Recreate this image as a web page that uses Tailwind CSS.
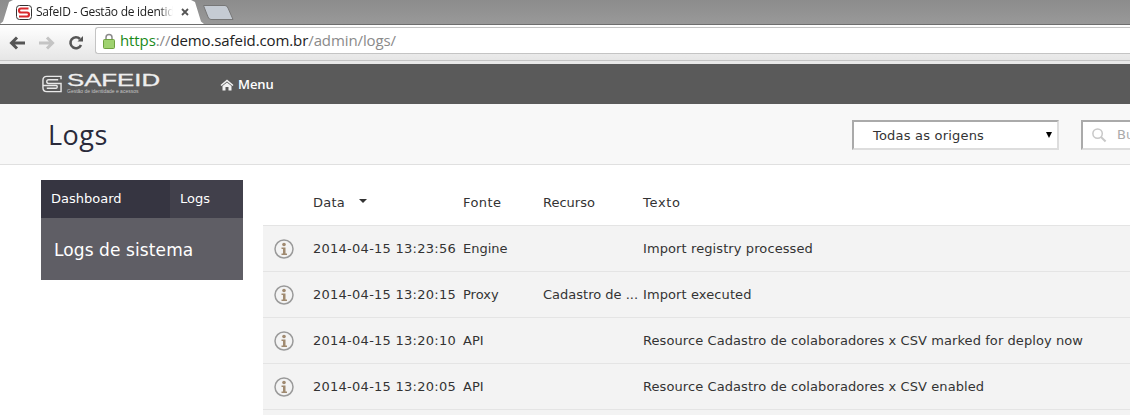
<!DOCTYPE html>
<html lang="pt-BR">
<head>
  <meta charset="UTF-8" />
  <meta name="viewport" content="width=device-width, initial-scale=1.0" />
  <title>SafeID - Logs</title>
  <script src="https://cdn.jsdelivr.net/npm/@tailwindcss/browser@4"></script>
</head>
<body class="w-[1130px] h-[415px] overflow-hidden bg-white font-['DejaVu_Sans',sans-serif] text-[13px] text-[#333]">

  <!-- browser tab strip -->
  <div class="h-[25px] bg-gradient-to-b from-[#8c8c8c] to-[#999] border-b border-[#6e6e6e] flex items-end">
    <div class="w-[204px] h-[24px] bg-white flex items-center pl-[16px] shrink-0 [clip-path:polygon(0_100%,3px_90%,9px_8%,13px_0,191px_0,195px_8%,201px_90%,204px_100%)]">
      <svg class="w-[16px] h-[15px] shrink-0" viewBox="0 0 16 15">
        <rect x="0.5" y="0.5" width="15" height="14" rx="3" fill="#fff" stroke="#333"/>
        <path d="M12.5 3.5 H5 Q3 3.5 3 5.5 Q3 7.5 5 7.5 H11 Q13 7.5 13 9.5 Q13 11.5 11 11.5 H3" fill="none" stroke="#d8282c" stroke-width="2.2"/>
      </svg>
      <span class="ml-[4px] w-[137px] overflow-hidden whitespace-nowrap font-['Open_Sans',sans-serif] text-[12px] tracking-[-0.25px] text-[#222] [mask-image:linear-gradient(to_right,black_90%,transparent)]">SafeID - Gestão de identid</span>
      <svg class="ml-[8px] w-[8px] h-[8px]" viewBox="0 0 8 8"><path d="M1 1 L7 7 M7 1 L1 7" stroke="#555" stroke-width="1.8"/></svg>
    </div>
    <svg class="ml-[-1px] mb-[4px] w-[31px] h-[15px]" viewBox="0 0 31 15"><path d="M0.5 0.5 H22 Q24 0.5 25 3 L30 14.5 H8 Q6 14.5 5 12 Z" fill="#c5cbd3" stroke="#777"/></svg>
  </div>

  <!-- browser toolbar -->
  <div class="h-[36px] bg-gradient-to-b from-white to-[#e6e6e6] flex items-center pl-[9px] border-b border-[#c4c4c4]">
    <svg class="w-[17px] h-[14px]" viewBox="0 0 17 14"><path d="M8 1.5 L2.5 7 L8 12.5 M3 7 H16" fill="none" stroke="#555" stroke-width="3"/></svg>
    <svg class="ml-[12px] w-[17px] h-[14px]" viewBox="0 0 17 14"><path d="M9 1.5 L14.5 7 L9 12.5 M14 7 H1" fill="none" stroke="#c4c4c4" stroke-width="3"/></svg>
    <svg class="ml-[13px] w-[16px] h-[16px]" viewBox="0 0 16 16"><path d="M13 10 A5.5 5.5 0 1 1 12 4" fill="none" stroke="#555" stroke-width="2.6"/><path d="M9.5 6.5 H15 V1 Z" fill="#555"/></svg>
    <div class="ml-[11px] flex-1 h-[27px] mb-[4px] bg-white border-y border-l border-[#c4c4c4] rounded-l-[3px] flex items-center pl-[7px] font-['Open_Sans',sans-serif] text-[15px] tracking-[-0.1px] whitespace-nowrap">
      <svg class="w-[12px] h-[16px] shrink-0" viewBox="0 0 12 16"><path d="M3 7 V4.5 A3 3 0 0 1 9 4.5 V7" fill="none" stroke="#8a8a8a" stroke-width="1.5"/><rect x="0.5" y="6.5" width="11" height="9" rx="1" fill="#9fd26f" stroke="#6fa040"/></svg>
      <span class="ml-[5px] text-[#1a8a1a]">https</span><span class="text-[#8a8a8a]">://</span><span class="text-[#222]">demo.safeid.com.br</span><span class="text-[#8a8a8a]">/admin/logs/</span>
    </div>
  </div>
  <div class="h-[3px] bg-[#e8e8e8]"></div>

  <!-- app navbar -->
  <header class="h-[40px] bg-[#5a5a5a] flex items-center pl-[42px] text-white">
    <div class="w-[118px] flex items-center shrink-0">
      <svg class="w-[20px] h-[18px] shrink-0" viewBox="0 0 21 18">
        <path d="M20 4 V1 H5 Q1 1 1 5 V13 Q1 17 5 17 H20 V8.5 H7 Q5 8.5 5 6.5 Q5 4.5 7 4.5 H17" fill="none" stroke="#e8e8e8" stroke-width="1.5"/>
        <path d="M1 10.5 H15 Q16 10.5 16 12 Q16 13.5 15 13.5 H5" fill="none" stroke="#e8e8e8" stroke-width="1.5"/>
      </svg>
      <div class="ml-[5px] flex flex-col">
        <svg class="w-[93px] h-[12px] overflow-visible" viewBox="0 0 93 12"><text x="0" y="12" textLength="93" lengthAdjust="spacingAndGlyphs" font-family="Liberation Sans" font-size="16.5" stroke="#eee" stroke-width="0.3" fill="#eee">SAFEID</text></svg>
        <span class="h-[6px] mt-[2px] leading-[6px] text-[5px] font-['Liberation_Sans',sans-serif] whitespace-nowrap text-[#c4c4c4]">Gestão de identidade e acessos</span>
      </div>
    </div>
    <div class="ml-[60px] pt-[1px] flex items-center font-['Open_Sans',sans-serif] font-semibold text-[13px] tracking-[-0.1px]">
      <svg class="w-[14px] h-[12px] mr-[4px]" viewBox="0 0 14 12"><path d="M7 0.5 L0.5 6 L1.5 7 L7 2.5 L12.5 7 L13.5 6 Z M2.5 7 L7 3.5 L11.5 7 V11.5 H8.5 V8 H5.5 V11.5 H2.5 Z" fill="#f2f2f2"/></svg>
      Menu
    </div>
  </header>

  <!-- page title bar -->
  <div class="h-[61px] bg-[#f8f8f8] border-b border-[#e0e0e0] flex items-center pl-[48px]">
    <h1 class="w-[804px] shrink-0 font-['Open_Sans',sans-serif] text-[27px] tracking-[0.5px] leading-none text-[#2a2a3a]">Logs</h1>
    <div class="relative mt-[2px] w-[207px] h-[30px] shrink-0 bg-white border-2 border-t-[#aaa] border-l-[#aaa] border-r-[#ddd] border-b-[#ddd] flex items-center pl-[19px] pt-[2px] text-[13px] tracking-[0.2px] text-[#333]">
      Todas as origens
      <span class="absolute right-[5px] top-[10px] w-0 h-0 border-x-[3.5px] border-x-transparent border-t-[6px] border-t-black"></span>
    </div>
    <div class="ml-[22px] mt-[2px] w-[49px] h-[30px] bg-white border-t-2 border-l-2 border-b-2 border-t-[#aaa] border-l-[#aaa] border-b-[#ddd] flex items-center pl-[8px] text-[13px] text-[#aaa] whitespace-nowrap shrink-0">
      <svg class="w-[16px] h-[16px] shrink-0 mr-[10px]" viewBox="0 0 17 17"><circle cx="7" cy="7" r="5" fill="none" stroke="#c8c8c8" stroke-width="1.6"/><path d="M10.5 10.5 L15.5 15.5" stroke="#c8c8c8" stroke-width="2.2"/></svg>
      Bu
    </div>
  </div>

  <!-- content -->
  <main class="flex pt-[15px] pl-[41px]">
    <aside class="w-[202px] shrink-0 self-start">
      <div class="h-[38px] flex text-white text-[13px]">
        <div class="w-[129px] bg-[#363541] flex items-center pl-[10px]">Dashboard</div>
        <div class="flex-1 bg-[#41404b] flex items-center pl-[10px]">Logs</div>
      </div>
      <div class="h-[62px] bg-[#5f5e65] flex items-center pl-[13px] pt-[3px] text-white text-[17px] tracking-[0.1px]">Logs de sistema</div>
    </aside>

    <section class="ml-[20px] flex-1 whitespace-nowrap">
      <div class="h-[46px] flex items-center pl-[50px] border-b border-[#e4e4e4]">
        <div class="w-[150px] flex items-center tracking-[0.2px]">Data<span class="ml-[14px] mb-[3px] w-0 h-0 border-x-[4px] border-x-transparent border-t-[4px] border-t-[#333]"></span></div>
        <div class="w-[80px] tracking-[0.4px]">Fonte</div>
        <div class="w-[100px]">Recurso</div>
        <div class="tracking-[0.7px]">Texto</div>
      </div>
      <div class="h-[46px] flex items-center bg-[#f3f3f3] border-b border-[#e4e4e4]">
        <div class="w-[50px] pl-[11px]"><svg class="w-[20px] h-[20px]" viewBox="0 0 20 20"><circle cx="10" cy="10" r="9" fill="none" stroke="#9a9a9a" stroke-width="1.5"/><circle cx="10" cy="5.5" r="1.8" fill="#a08a70"/><path d="M7.5 8.5 H11.5 V14.5 H13 V16 H7.5 V14.5 H9 V10 H7.5 Z" fill="#a08a70"/></svg></div>
        <div class="w-[150px] tracking-[0.26px]">2014-04-15 13:23:56</div>
        <div class="w-[80px]">Engine</div>
        <div class="w-[100px]"></div>
        <div class="tracking-[0.1px]">Import registry processed</div>
      </div>
      <div class="h-[46px] flex items-center bg-[#f3f3f3] border-b border-[#e4e4e4]">
        <div class="w-[50px] pl-[11px]"><svg class="w-[20px] h-[20px]" viewBox="0 0 20 20"><circle cx="10" cy="10" r="9" fill="none" stroke="#9a9a9a" stroke-width="1.5"/><circle cx="10" cy="5.5" r="1.8" fill="#a08a70"/><path d="M7.5 8.5 H11.5 V14.5 H13 V16 H7.5 V14.5 H9 V10 H7.5 Z" fill="#a08a70"/></svg></div>
        <div class="w-[150px] tracking-[0.26px]">2014-04-15 13:20:15</div>
        <div class="w-[80px]">Proxy</div>
        <div class="w-[100px]">Cadastro de ...</div>
        <div class="tracking-[0.1px]">Import executed</div>
      </div>
      <div class="h-[46px] flex items-center bg-[#f3f3f3] border-b border-[#e4e4e4]">
        <div class="w-[50px] pl-[11px]"><svg class="w-[20px] h-[20px]" viewBox="0 0 20 20"><circle cx="10" cy="10" r="9" fill="none" stroke="#9a9a9a" stroke-width="1.5"/><circle cx="10" cy="5.5" r="1.8" fill="#a08a70"/><path d="M7.5 8.5 H11.5 V14.5 H13 V16 H7.5 V14.5 H9 V10 H7.5 Z" fill="#a08a70"/></svg></div>
        <div class="w-[150px] tracking-[0.26px]">2014-04-15 13:20:10</div>
        <div class="w-[80px]">API</div>
        <div class="w-[100px]"></div>
        <div class="tracking-[0.08px]">Resource Cadastro de colaboradores x CSV marked for deploy now</div>
      </div>
      <div class="h-[46px] flex items-center bg-[#f3f3f3] border-b border-[#e4e4e4]">
        <div class="w-[50px] pl-[11px]"><svg class="w-[20px] h-[20px]" viewBox="0 0 20 20"><circle cx="10" cy="10" r="9" fill="none" stroke="#9a9a9a" stroke-width="1.5"/><circle cx="10" cy="5.5" r="1.8" fill="#a08a70"/><path d="M7.5 8.5 H11.5 V14.5 H13 V16 H7.5 V14.5 H9 V10 H7.5 Z" fill="#a08a70"/></svg></div>
        <div class="w-[150px] tracking-[0.26px]">2014-04-15 13:20:05</div>
        <div class="w-[80px]">API</div>
        <div class="w-[100px]"></div>
        <div class="tracking-[0.08px]">Resource Cadastro de colaboradores x CSV enabled</div>
      </div>
      <div class="h-[6px] bg-[#f3f3f3]"></div>
    </section>
  </main>
</body>
</html>
